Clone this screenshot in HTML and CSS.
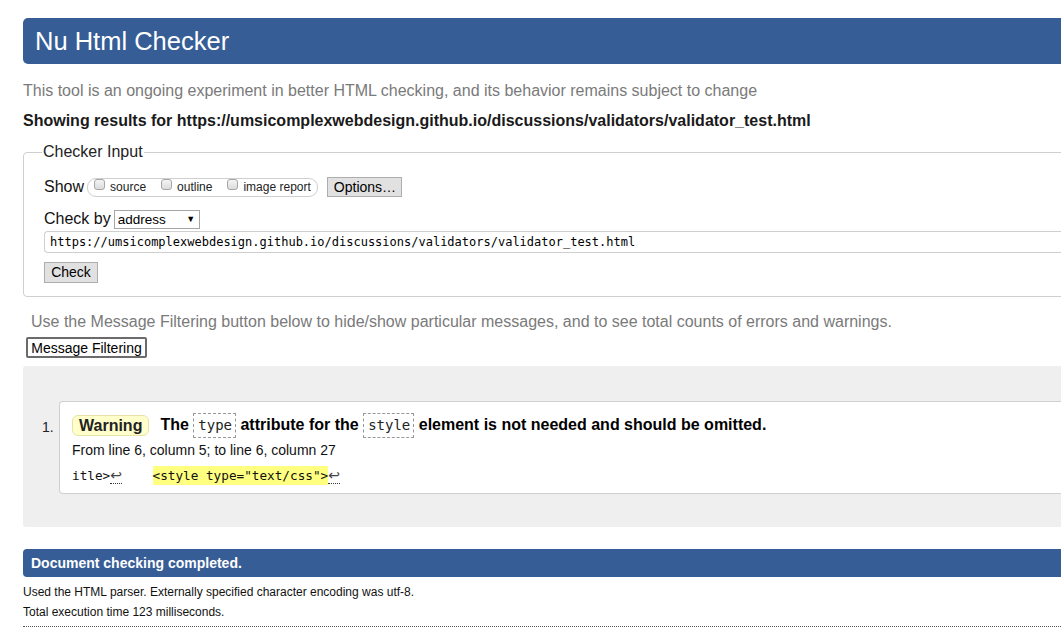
FILE: index.html
```html
<!DOCTYPE html>
<html lang="en">
<head>
<meta charset="utf-8">
<title>Nu Html Checker</title>
<link rel="stylesheet" href="styles.css">
</head>
<body>
<div class="page">
  <h1 class="title">Nu Html Checker</h1>
  <p class="intro">This tool is an ongoing experiment in better HTML checking, and its behavior remains subject to change</p>
  <p class="showing">Showing results for https://umsicomplexwebdesign.github.io/discussions/validators/validator_test.html</p>

  <form class="checker">
    <fieldset class="input-box">
      <legend class="legend">Checker Input</legend>
      <div class="row row-show">
        <span class="lbl">Show</span>
        <span class="opts">
          <label class="opt"><input type="checkbox" class="cb">source</label>
          <label class="opt"><input type="checkbox" class="cb">outline</label>
          <label class="opt"><input type="checkbox" class="cb">image report</label>
        </span>
        <button type="button" class="btn btn-options">Options…</button>
      </div>
      <div class="row row-by">
        <span class="lbl">Check by</span>
        <span class="select"><span class="select-val">address</span><span class="select-arrow">▼</span></span>
      </div>
      <div class="url">https://umsicomplexwebdesign.github.io/discussions/validators/validator_test.html</div>
      <div class="row-check"><button type="button" class="btn btn-check">Check</button></div>
    </fieldset>
  </form>

  <p class="filter-note">Use the Message Filtering button below to hide/show particular messages, and to see total counts of errors and warnings.</p>
  <button type="button" class="btn-filter">Message Filtering</button>

  <div class="results">
    <ol class="msgs">
      <li class="msg">
        <span class="num">1.</span>
        <div class="msg-box">
          <p class="msg-head"><span class="badge">Warning</span><span class="msg-text">The <code class="cd">type</code> attribute for the <code class="cd">style</code> element is not needed and should be omitted.</span></p>
          <p class="loc">From line 6, column 5; to line 6, column 27</p>
          <p class="extract"><span>itle&gt;</span><span class="lf">↩</span><span>    </span><mark class="hl">&lt;style type="text/css"&gt;</mark><span class="lf">↩</span></p>
        </div>
      </li>
    </ol>
  </div>

  <h2 class="done">Document checking completed.</h2>
  <p class="details details-first">Used the HTML parser. Externally specified character encoding was utf-8.</p>
  <p class="details">Total execution time 123 milliseconds.</p>
  <div class="rule"></div>
</div>
</body>
</html>
```

FILE: styles.css
```css
html, body {
  margin: 0;
  padding: 0;
  background: #fff;
  overflow: hidden;
}
body {
  font-family: "Liberation Sans", Arial, sans-serif;
  color: #000;
}
.page {
  width: 1150px;
  padding: 18px 0 0 23px;
}
.title {
  margin: 0;
  height: 46px;
  background: #365d96;
  color: #fff;
  font-weight: normal;
  font-size: 25.5px;
  line-height: 46px;
  padding-left: 12px;
  border-radius: 5px 0 0 5px;
}
.intro {
  margin: 17px 0 0;
  font-size: 16px;
  line-height: 20px;
  color: #7a7a7a;
}
.showing {
  margin: 10px 0 0;
  font-size: 16px;
  line-height: 20px;
  font-weight: bold;
  color: #1a1a1a;
}
.checker {
  margin: 0;
}
.input-box {
  margin: 12px 0 0;
  padding: 16px 0 13px 20px;
  border: 1px solid #cfcfcf;
  border-radius: 4px;
}
.legend {
  font-size: 16px;
  color: #222;
  padding: 0 1px;
  margin-left: -2px;
  line-height: 18px;
}
.row {
  display: flex;
  align-items: center;
}
.lbl {
  font-size: 16px;
  color: #111;
}
.row-show {
  height: 20px;
}
.opts {
  display: flex;
  align-items: center;
  height: 17px;
  margin-left: 3px;
  padding: 0 6px 0 6px;
  border: 1px solid #cfcfcf;
  border-radius: 9px;
}
.opt {
  display: flex;
  align-items: center;
  font-size: 12px;
  color: #222;
  margin-right: 15px;
}
.opt:last-child {
  margin-right: 0;
}
.cb {
  appearance: none;
  -webkit-appearance: none;
  width: 11px;
  height: 11px;
  margin: -5px 5px 0 0;
  border: 1px solid #a6a6a6;
  border-radius: 3px;
  background: linear-gradient(#f4f4f4, #dcdcdc);
}
.btn {
  font-family: "Liberation Sans", Arial, sans-serif;
  font-size: 14px;
  color: #000;
  background: #e1e1e1;
  border: 1px solid #adadad;
  border-radius: 0;
  padding: 0 6px;
  line-height: 17px;
  height: 20px;
}
.btn-options {
  margin-left: 9px;
  width: 75px;
}
.row-by {
  margin-top: 12px;
  height: 20px;
}
.select {
  display: flex;
  align-items: center;
  justify-content: space-between;
  width: 81px;
  height: 17px;
  margin-left: 3px;
  padding: 0 0 0 3px;
  border: 1px solid #a6a6a6;
  font-size: 13.5px;
  color: #000;
}
.select-arrow {
  font-size: 9px;
  width: 16px;
  text-align: center;
}
.url {
  margin-top: 2px;
  height: 20px;
  line-height: 20px;
  border: 1px solid #cfcfcf;
  border-right: none;
  border-radius: 4px 0 0 4px;
  padding-left: 5px;
  font-family: "DejaVu Sans Mono", monospace;
  font-size: 12px;
  color: #000;
}
.row-check {
  margin-top: 9px;
}
.btn-check {
  width: 54px;
  height: 21px;
  padding: 0;
}
.filter-note {
  margin: 16px 0 0 8px;
  font-size: 16px;
  line-height: 18px;
  color: #7a7a7a;
}
.btn-filter {
  display: block;
  margin: 6px 0 0 3px;
  width: 121px;
  height: 21px;
  padding: 0;
  font-family: "Liberation Sans", Arial, sans-serif;
  font-size: 14px;
  color: #000;
  background: #fdfdfd;
  border: 2px solid #6b6b6b;
  border-radius: 2px;
}
.results {
  margin-top: 8px;
  height: 161px;
  background: #efefef;
  border-radius: 3px 0 0 3px;
  padding-top: 35px;
  box-sizing: border-box;
}
.msgs {
  list-style: none;
  margin: 0;
  padding: 0 0 0 19px;
}
.msg {
  display: flex;
  align-items: flex-start;
}
.num {
  font-size: 14px;
  color: #222;
  width: 17px;
  padding-top: 18px;
}
.msg-box {
  flex: 1;
  height: 93px;
  box-sizing: border-box;
  background: #fff;
  border: 1px solid #d0d0d0;
  border-right: none;
  border-radius: 4px 0 0 4px;
  padding: 11px 0 0 12px;
}
.msg-head {
  margin: 0;
  display: flex;
  align-items: center;
  font-size: 16px;
  font-weight: bold;
  height: 25px;
}
.badge {
  display: inline-block;
  height: 19px;
  line-height: 19px;
  padding: 0 6px;
  background: #ffffcc;
  border: 1px solid #e6e2a8;
  border-radius: 6px;
  color: #222;
  margin-right: 11px;
}
.msg-text {
  color: #000;
}
.cd {
  display: inline-block;
  font-family: "DejaVu Sans Mono", monospace;
  font-weight: normal;
  font-size: 14px;
  line-height: 23px;
  padding: 0 3px 0 4px;
  border: 1px dashed #999;
  color: #222;
}
.loc {
  margin: 3px 0 0;
  font-size: 14px;
  line-height: 18px;
  color: #111;
}
.extract {
  margin: 7px 0 0;
  font-family: "DejaVu Sans Mono", monospace;
  font-size: 12.7px;
  line-height: 18px;
  white-space: pre;
  color: #111;
}
.lf {
  font-family: "DejaVu Sans", sans-serif;
  font-size: 14px;
  color: #444;
  border-bottom: 1px dotted #333;
}
.hl {
  background: #ffff80;
  color: #111;
  padding: 2px 0;
}
.done {
  margin: 22px 0 0;
  height: 28px;
  line-height: 28px;
  background: #365d96;
  color: #fff;
  font-size: 14px;
  font-weight: bold;
  padding-left: 8px;
  border-radius: 4px 0 0 4px;
}
.details {
  margin: 0;
  font-size: 12px;
  line-height: 20px;
  color: #111;
}
.details-first {
  margin-top: 5px;
}
.rule {
  margin-top: 4px;
  border-top: 1px dotted #555;
}
```
